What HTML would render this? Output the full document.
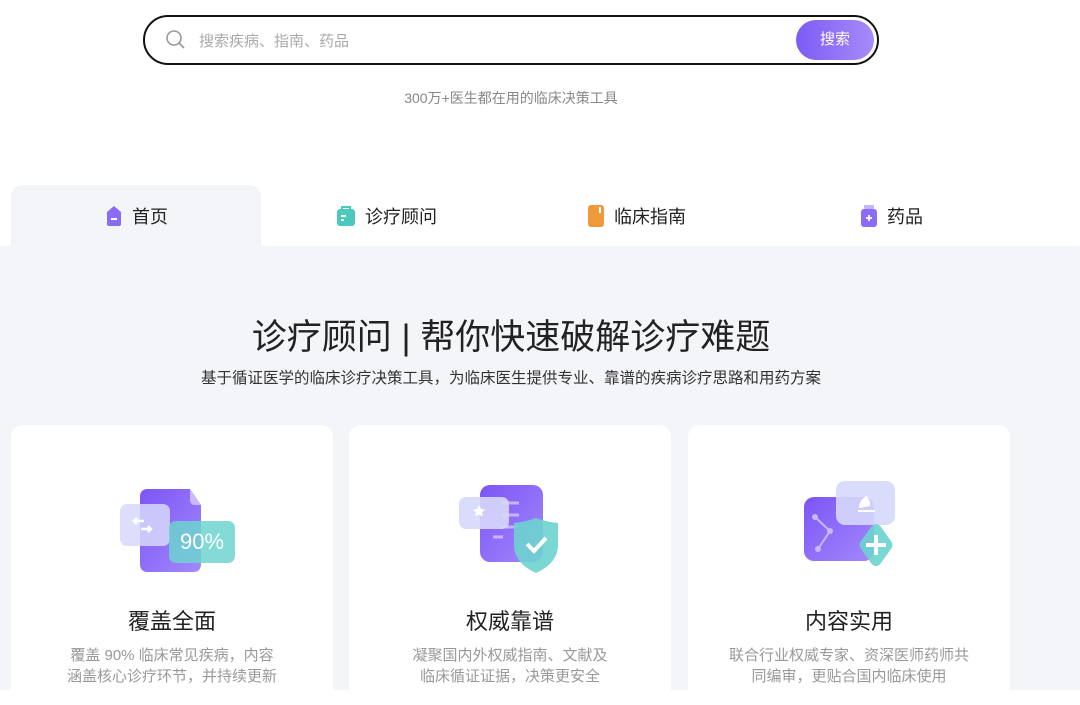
<!DOCTYPE html>
<html><head><meta charset="utf-8"><style>
*{margin:0;padding:0;box-sizing:border-box}
body{width:1080px;height:690px;overflow:hidden;background:#fff;font-family:"Liberation Sans","Noto Sans CJK SC",sans-serif;position:relative}
.search{position:absolute;left:143px;top:15px;width:736px;height:50px;border:2px solid #111;border-radius:25px;background:#fff}
.search .ph{position:absolute;left:54px;top:13px;font-size:15px;color:#aaa}
.search .btn{position:absolute;right:3px;top:3px;width:78px;height:40px;border-radius:20px;background:linear-gradient(90deg,#7b5cf5,#a78bfa);color:#fff;font-size:15px;text-align:center;line-height:40px}
.sub{position:absolute;top:88px;left:0;width:1022px;text-align:center;font-size:14px;color:#888}
.gray{position:absolute;left:0;top:246px;width:1080px;height:444px;background:#f4f5f9}
.tab{position:absolute;top:185px;height:61px;width:250px;display:flex;align-items:center;justify-content:center;font-size:18px;color:#222;gap:8px}
.tab.act{left:11px;background:#f4f5f9;border-radius:12px 12px 0 0}
h1{position:absolute;top:309px;left:0;width:1022px;text-align:center;font-size:35px;font-weight:normal;color:#222}
.desc{position:absolute;top:366px;left:0;width:1022px;text-align:center;font-size:15.5px;color:#333}
.card{position:absolute;top:425px;width:322px;height:280px;background:#fff;border-radius:12px}
.card h3{position:absolute;top:179px;width:100%;text-align:center;font-size:22px;font-weight:normal;color:#222}
.card p{position:absolute;top:220px;width:100%;text-align:center;font-size:15px;color:#999;line-height:21px}
.card svg{position:absolute;top:50px;left:100px}
</style></head><body>
<div class="search">
<svg style="position:absolute;left:20px;top:12px" width="22" height="22" viewBox="0 0 22 22"><circle cx="9" cy="9" r="7" fill="none" stroke="#999" stroke-width="1.6"/><path d="M14 14l5 5" stroke="#999" stroke-width="1.6"/></svg>
<div class="ph">搜索疾病、指南、药品</div>
<div class="btn">搜索</div>
</div>
<div class="sub">300万+医生都在用的临床决策工具</div>
<div class="gray"></div>
<div class="tab act"><svg width="20" height="24" viewBox="0 0 20 24"><path d="M10 2L17 8V20Q17 22 15 22H5Q3 22 3 20V8Z" fill="#8b6cf6"/><rect x="7" y="14" width="6" height="2" fill="#fff"/></svg>首页</div>
<div class="tab" style="left:261px"><svg width="22" height="24" viewBox="0 0 22 24"><rect x="2" y="5" width="18" height="17" rx="3" fill="#4cc9bf"/><path d="M7 5V3h8v2" stroke="#4cc9bf" stroke-width="2" fill="none"/><rect x="6" y="11" width="5" height="2" fill="#fff"/><rect x="6" y="15" width="3" height="2" fill="#fff"/></svg>诊疗顾问</div>
<div class="tab" style="left:511px"><svg width="20" height="24" viewBox="0 0 20 24"><rect x="2" y="1" width="16" height="22" rx="3" fill="#f0993a"/><rect x="13" y="3" width="2" height="6" fill="#fff"/></svg>临床指南</div>
<div class="tab" style="left:766px"><svg width="20" height="24" viewBox="0 0 20 24"><rect x="5" y="1" width="10" height="4" rx="1" fill="#c4b5fd"/><rect x="2" y="5" width="16" height="18" rx="3" fill="#8b6cf6"/><path d="M10 11v6M7 14h6" stroke="#fff" stroke-width="1.8"/></svg>药品</div>
<h1>诊疗顾问 | 帮你快速破解诊疗难题</h1>
<div class="desc">基于循证医学的临床诊疗决策工具，为临床医生提供专业、靠谱的疾病诊疗思路和用药方案</div>
<div class="card" style="left:11px">
<svg width="130" height="100" viewBox="0 0 130 100"><defs><linearGradient id="g1" x1="0" y1="0" x2="1" y2="1"><stop offset="0" stop-color="#7c55f6"/><stop offset="1" stop-color="#a388fb"/></linearGradient></defs>
<path d="M37 14h42l11 16v59q0 8-8 8H37q-8 0-8-8V22q0-8 8-8z" fill="url(#g1)"/><path d="M79 14l11 16h-6q-5 0-5-5z" fill="#c9b8fd"/>
<rect x="9" y="29" width="50" height="42" rx="7" fill="#d6d8fb" opacity=".85"/><path d="M23 46h10M26 43l-3 3 3 3M30 54h10M37 51l3 3-3 3" stroke="#fff" stroke-width="2.5" fill="none"/>
<rect x="58" y="46" width="66" height="42" rx="7" fill="#6dd3cf" opacity=".85"/><text x="91" y="74" font-size="22" fill="#fff" text-anchor="middle" font-family="Liberation Sans">90%</text></svg>
<h3>覆盖全面</h3><p>覆盖 90% 临床常见疾病，内容<br>涵盖核心诊疗环节，并持续更新</p></div>
<div class="card" style="left:349px">
<svg width="130" height="100" viewBox="0 0 130 100"><rect x="31" y="10" width="63" height="77" rx="10" fill="url(#g1)"/><path d="M52 28h18M52 40h18M52 52h18M44 62h10" stroke="#c4b5fd" stroke-width="3"/>
<rect x="10" y="22" width="50" height="32" rx="7" fill="#d6d8fb" opacity=".9"/><path d="M30 30l2 4 4 .5-3 3 1 4-4-2-4 2 1-4-3-3 4-.5z" fill="#fff"/>
<path d="M87 43q11 4 22 5v22q0 18-22 28-22-10-22-28V48q11-1 22-5z" fill="#6dd3cf" opacity=".9"/><path d="M78 69l7 7 12-13" stroke="#fff" stroke-width="4" fill="none"/></svg>
<h3>权威靠谱</h3><p>凝聚国内外权威指南、文献及<br>临床循证证据，决策更安全</p></div>
<div class="card" style="left:688px">
<svg width="130" height="100" viewBox="0 0 130 100"><rect x="16" y="22" width="70" height="64" rx="10" fill="url(#g1)"/><path d="M27 42l15 14-12 18" stroke="#c9b8fd" stroke-width="2" fill="none"/><circle cx="27" cy="42" r="3" fill="#c9b8fd"/><circle cx="42" cy="56" r="3" fill="#c9b8fd"/><circle cx="30" cy="74" r="3" fill="#c9b8fd"/>
<rect x="48" y="6" width="59" height="44" rx="9" fill="#d6d8fb" opacity=".9"/><path d="M71 33q0-8 8-12l3 6v4z" fill="#fff"/><path d="M70 36h17" stroke="#fff" stroke-width="2"/>
<path d="M83 52q5-6 10 0l10 14q3 4 0 8l-10 14q-5 6-10 0l-10-14q-3-4 0-8z" fill="#6dd3cf" opacity=".9"/><path d="M88 60v20M78 70h20" stroke="#fff" stroke-width="4"/></svg>
<h3>内容实用</h3><p>联合行业权威专家、资深医师药师共<br>同编审，更贴合国内临床使用</p></div>
</body></html>
